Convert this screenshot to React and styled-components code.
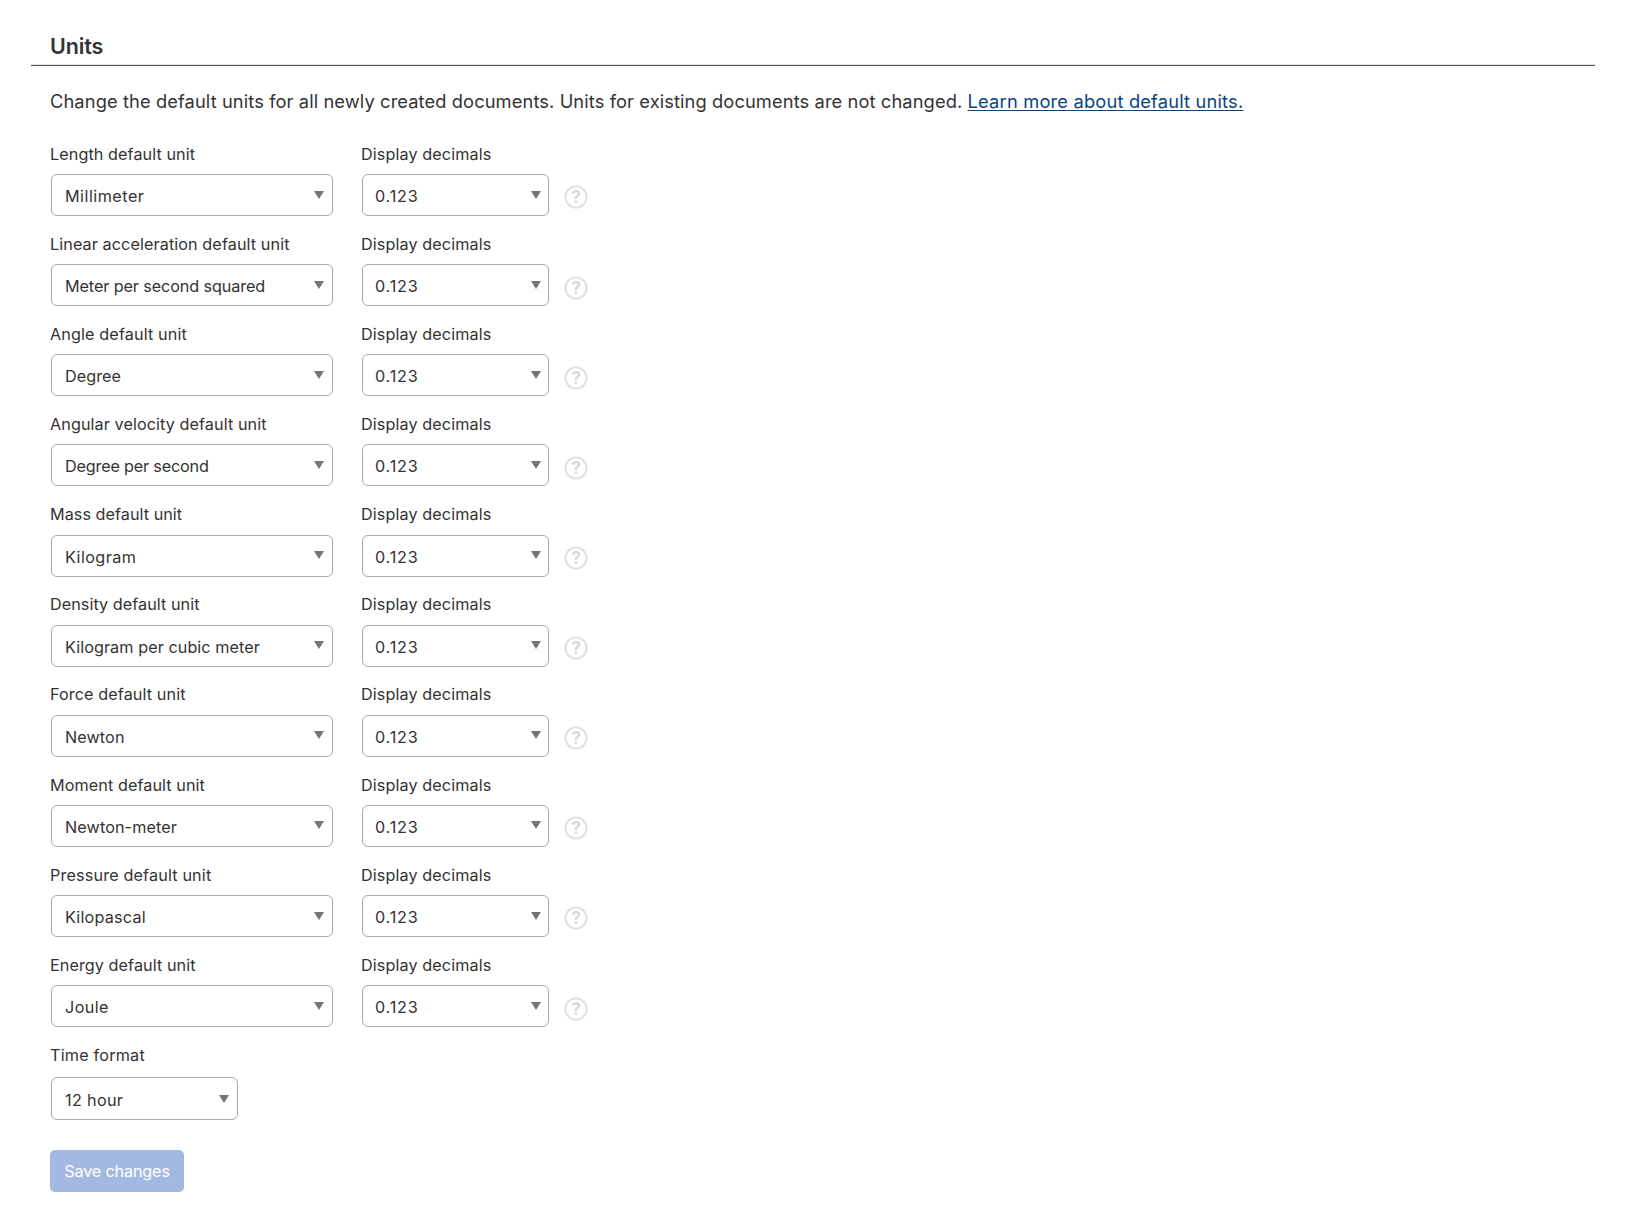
import React from 'react';
import styled, { createGlobalStyle } from 'styled-components';

const GlobalStyle = createGlobalStyle`
  * { box-sizing: border-box; }
  body {
    margin: 0;
    background: #fff;
    color: #333;
    font-family: Inter, Roboto, "Liberation Sans", sans-serif;
    font-size: 16.2px;
  }
`;

const Page = styled.main`
  width: 1645px;
  height: 1232px;
  padding: 0 50px 0 31px;
  overflow: hidden;
`;

const Header = styled.header`
  height: 66px;
  padding: 31px 0 0 19px;
  border-bottom: 1px solid #555;
  box-shadow: inset 0 -1px 0 #e2e2e2;
`;

const Title = styled.h1`
  margin: 0;
  font-size: 21.5px;
  line-height: 30px;
  font-weight: 600;
  letter-spacing: -0.1px;
`;

const Content = styled.div`
  padding-left: 19px;
`;

const Intro = styled.p`
  margin: 0;
  padding-top: 21px;
  height: 77.65px;
  font-size: 18.3px;
  line-height: 28px;
  letter-spacing: 0.1px;
  white-space: nowrap;
`;

const Link = styled.a`
  color: #0d447a;
  letter-spacing: 0.18px;
  text-decoration: underline;
  text-decoration-thickness: 1px;
  text-underline-offset: 2px;
`;

const Form = styled.form`
  display: flex;
  flex-direction: column;
  align-items: flex-start;
`;

const Row = styled.div`
  display: flex;
  height: 90.14px;
`;

const Field = styled.div`
  display: flex;
  flex-direction: column;
  width: ${(p) => p.$width}px;
`;

const Label = styled.label`
  height: ${(p) => (p.$tall ? 32.2 : 30.4)}px;
  line-height: 21px;
  letter-spacing: ${(p) => p.$tracking}px;
  white-space: nowrap;
`;

const Select = styled.button`
  display: flex;
  align-items: center;
  justify-content: space-between;
  width: ${(p) => p.$width}px;
  height: ${(p) => (p.$tall ? 43 : 42)}px;
  margin: 0 0 0 1px;
  padding: ${(p) => (p.$tall ? 3 : 2)}px ${(p) => p.$end ?? 8}px 0 ${(p) => p.$inset ?? 13}px;
  border: 1px solid #aaa;
  border-radius: 6px;
  background: #fff;
  color: #333;
  font: inherit;
  letter-spacing: ${(p) => p.$tracking}px;
  text-align: left;
`;

const ArrowIcon = styled.svg`
  width: 10px;
  height: 8px;
  margin-bottom: 3px;
  fill: #757575;
`;

const HelpIcon = styled.svg`
  flex: none;
  width: 24px;
  height: 24px;
  margin: 41.8px 0 0 0.2px;
`;

const HelpMark = styled.text`
  fill: #d9d9d9;
  font: 700 18.5px Roboto, sans-serif;
  text-anchor: middle;
`;

const SaveButton = styled.button`
  width: 134px;
  height: 42px;
  margin-top: 30px;
  padding: 0 0 1px;
  border: 0;
  border-radius: 5px;
  background: #a3b9e1;
  color: #fff;
  font: inherit;
  letter-spacing: -0.15px;
`;

const units = [
  { label: 'Length default unit', value: 'Millimeter', labelTracking: 0.08, tracking: 0.48 },
  { label: 'Linear acceleration default unit', value: 'Meter per second squared', labelTracking: 0.09, tracking: -0.1 },
  { label: 'Angle default unit', value: 'Degree', labelTracking: 0.12, tracking: 0.04 },
  { label: 'Angular velocity default unit', value: 'Degree per second', labelTracking: 0.08, tracking: -0.18 },
  { label: 'Mass default unit', value: 'Kilogram', labelTracking: 0.04, tracking: 0.42 },
  { label: 'Density default unit', value: 'Kilogram per cubic meter', labelTracking: 0.05, tracking: 0.07 },
  { label: 'Force default unit', value: 'Newton', labelTracking: 0.1, tracking: 0.09 },
  { label: 'Moment default unit', value: 'Newton-meter', labelTracking: 0.08, tracking: 0.1 },
  { label: 'Pressure default unit', value: 'Kilopascal', labelTracking: 0.15, tracking: 0.2 },
  { label: 'Energy default unit', value: 'Joule', labelTracking: 0.07, tracking: 0.39 },
];

function Dropdown({ value, ...rest }) {
  return (
    <Select type="button" {...rest}>
      <span>{value}</span>
      <ArrowIcon viewBox="0 0 10 8">
        <path d="M0 0h10L5 8z" />
      </ArrowIcon>
    </Select>
  );
}

function Help() {
  return (
    <HelpIcon viewBox="0 0 24 24">
      <circle cx="12" cy="12" r="10.6" fill="none" stroke="#e0e0e0" strokeWidth="1.9" />
      <HelpMark x="12" y="18.3">?</HelpMark>
    </HelpIcon>
  );
}

export default function App() {
  return (
    <Page>
      <GlobalStyle />
      <Header>
        <Title>Units</Title>
      </Header>
      <Content>
        <Intro>
          Change the default units for all newly created documents. Units for existing documents are not changed.{' '}
          <Link href="#">Learn more about default units.</Link>
        </Intro>
        <Form>
          {units.map((unit) => (
            <Row key={unit.label}>
              <Field $width={311}>
                <Label $tracking={unit.labelTracking}>{unit.label}</Label>
                <Dropdown value={unit.value} $width={282} $tracking={unit.tracking} />
              </Field>
              <Field $width={203}>
                <Label $tracking={0.1}>Display decimals</Label>
                <Dropdown value="0.123" $width={187} $inset={12} $end={7.3} $tracking={0.82} />
              </Field>
              <Help />
            </Row>
          ))}
          <Field $width={311}>
            <Label $tall $tracking={0.2}>Time format</Label>
            <Dropdown value="12 hour" $tall $width={187} $tracking={0.33} />
          </Field>
          <SaveButton type="button">Save changes</SaveButton>
        </Form>
      </Content>
    </Page>
  );
}
